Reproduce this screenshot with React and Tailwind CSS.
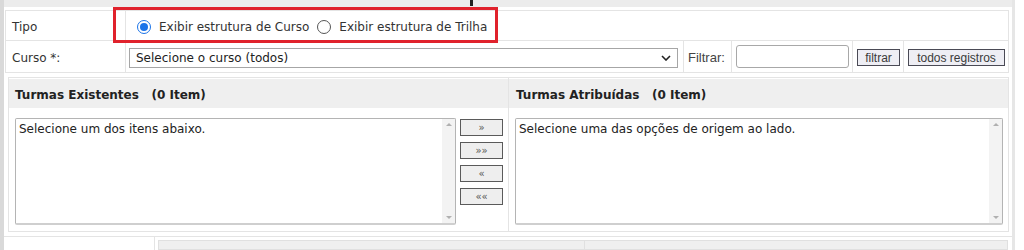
import React from "react";

function Radio({ checked, label }) {
  return (
    <label className="flex items-center gap-[8px]">
      <span
        className={
          "w-[14px] h-[14px] rounded-full border flex items-center justify-center bg-white " +
          (checked ? "border-[#1a73e8]" : "border-[#555]")
        }
      >
        {checked && <span className="w-[8px] h-[8px] rounded-full bg-[#1a73e8]" />}
      </span>
      <span>{label}</span>
    </label>
  );
}

function ListBox({ text, width }) {
  return (
    <div
      className={`${width} h-[107px] border border-[#b4b4b4] border-b-[2px] border-b-[#cfcfcf] rounded-[2px] flex bg-white`}
    >
      <div className="flex-1 px-[3px] pt-[1px] text-[#222]">{text}</div>
      <div className="w-[13px] bg-[#f3f3f3] flex flex-col items-center justify-between py-[4px]">
        <span className="w-0 h-0 border-l-[3px] border-r-[3px] border-b-[3px] border-l-transparent border-r-transparent border-b-[#b0b0b0]" />
        <span className="w-0 h-0 border-l-[3px] border-r-[3px] border-t-[3px] border-l-transparent border-r-transparent border-t-[#b0b0b0]" />
      </div>
    </div>
  );
}

function MoveButton({ children }) {
  return (
    <button className="w-[43px] h-[17px] border border-[#5a5a5a] bg-[#eeeeee] text-[10px] leading-none text-[#555] flex items-center justify-center">
      {children}
    </button>
  );
}

export default function App() {
  return (
    <div className="relative w-[1024px] h-[250px] bg-white overflow-hidden flex text-[12px] text-[#333] font-['DejaVu_Sans',sans-serif]">
      <div className="w-[4px] bg-[#d9d9d9]" />

      <div className="w-[1008px] flex flex-col">
        <div className="h-[7px] bg-[#ececec]" />

        {/* form */}
        <div className="mt-[3px] ml-[1px] w-[1004px] border border-[#e4e4e4]">
          <div className="flex h-[30px] border-b border-[#e4e4e4]">
            <div className="w-[120px] border-r border-[#e4e4e4] flex items-center pl-[6px] pt-[2px]">
              Tipo
            </div>
            <div className="flex-1 flex items-center gap-[8px] pl-[11px] pt-[2px]">
              <Radio checked label="Exibir estrutura de Curso" />
              <Radio label="Exibir estrutura de Trilha" />
            </div>
          </div>
          <div className="flex h-[31px]">
            <div className="w-[120px] border-r border-[#e4e4e4] flex items-center pl-[6px] pt-[2px]">
              Curso *:
            </div>
            <div className="w-[558px] border-r border-[#e4e4e4] flex items-center pl-[3px] pt-[2px]">
              <div className="w-[549px] h-[20px] border border-[#a6a6a6] flex items-center justify-between pl-[6px] pr-[6px] text-[#222]">
                <span>Selecione o curso (todos)</span>
                <svg width="10" height="6" viewBox="0 0 10 6">
                  <path d="M1 1 L5 5 L9 1" fill="none" stroke="#222" strokeWidth="1.6" />
                </svg>
              </div>
            </div>
            <div className="w-[48px] border-r border-[#e4e4e4] flex items-center pl-[4px] pt-[2px] text-[13px] text-[#444] font-['Liberation_Sans',sans-serif]">
              Filtrar:
            </div>
            <div className="w-[121px] border-r border-[#e4e4e4] flex items-center pl-[4px]">
              <div className="w-[113px] h-[23px] border border-[#a8a8a8] rounded-[3px] bg-white" />
            </div>
            <div className="w-[51px] border-r border-[#e4e4e4] flex items-center pl-[4px] pt-[2px]">
              <button className="w-[43px] h-[17px] border border-[#4a4a55] bg-[#eeeef4] text-[12px] text-[#3a3a3a] leading-none font-['Liberation_Sans',sans-serif]">
                filtrar
              </button>
            </div>
            <div className="flex-1 flex items-center pl-[4px] pt-[2px]">
              <button className="w-[97px] h-[17px] border border-[#4a4a55] bg-[#eeeef4] text-[12px] text-[#3a3a3a] leading-none font-['Liberation_Sans',sans-serif]">
                todos registros
              </button>
            </div>
          </div>
        </div>

        {/* panels */}
        <div className="mt-[4px] ml-[4px] w-[1001px] h-[155px] border border-[#e4e4e4] flex">
          <div className="w-[500px] border-r border-[#e4e4e4] flex flex-col">
            <div className="h-[29px] mt-[1px] bg-[#efefef] flex items-center pl-[6px] pt-[3px] font-bold text-[#222] whitespace-pre">
              {"Turmas Existentes   (0 Item)"}
            </div>
            <div className="flex gap-[4px] pl-[6px] pt-[10px]">
              <ListBox width="w-[441px]" text="Selecione um dos itens abaixo." />
              <div className="flex flex-col gap-[6px] mt-[1px]">
                <MoveButton>»</MoveButton>
                <MoveButton>»»</MoveButton>
                <MoveButton>«</MoveButton>
                <MoveButton>««</MoveButton>
              </div>
            </div>
          </div>
          <div className="flex-1 flex flex-col">
            <div className="h-[29px] mt-[1px] bg-[#efefef] flex items-center pl-[7px] pt-[3px] font-bold text-[#222] whitespace-pre">
              {"Turmas Atribuídas   (0 Item)"}
            </div>
            <div className="pl-[6px] pt-[10px]">
              <ListBox width="w-[488px]" text="Selecione uma das opções de origem ao lado." />
            </div>
          </div>
        </div>

        {/* bottom */}
        <div className="mt-[4px] border-t border-[#e4e4e4] flex flex-1">
          <div className="w-[151px] border-r border-[#e4e4e4]" />
          <div className="mt-[3px] ml-[3px] w-[850px] bg-[#efefef] border border-[#e0e0e0] flex">
            <div className="w-[426px] border-r border-[#e0e0e0]" />
          </div>
        </div>
      </div>

      <div className="w-[3px] bg-[#e6e6e6]" />

      {/* annotation overlay */}
      <div className="absolute left-[113px] top-[7px] w-[385px] h-[36px] border-[3px] border-[#e0222c]" />
      <div className="absolute left-[470px] top-0 w-[3px] h-[6px] bg-[#222]" />
    </div>
  );
}
